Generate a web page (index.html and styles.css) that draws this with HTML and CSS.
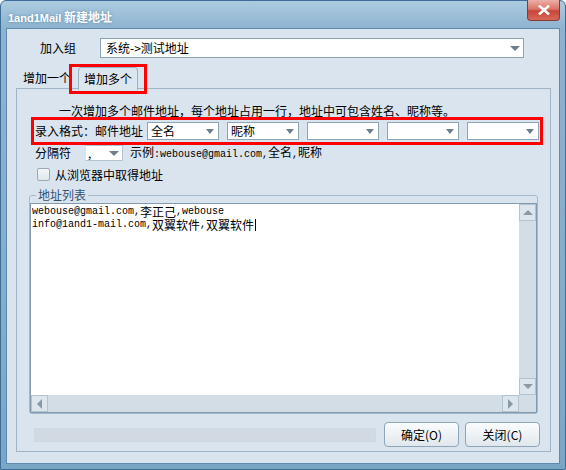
FILE: index.html
```html
<!DOCTYPE html>
<html lang="zh">
<head>
<meta charset="utf-8">
<title>1and1Mail 新建地址</title>
<link rel="stylesheet" href="styles.css">
</head>
<body>
<div class="window">
  <div class="titlebar">
    <span class="title"><span class="latin">1and1Mail</span> 新建地址</span>
    <div class="close">
      <svg width="12" height="10" viewBox="0 0 12 10"><path d="M2 1.5 L10 8.5 M10 1.5 L2 8.5" stroke="#fff" stroke-width="2.6" stroke-linecap="square"/></svg>
    </div>
  </div>
  <div class="client">
    <div class="group-row">
      <span class="group-label">加入组</span>
      <div class="combo combo-wide"><span class="combo-text">系统-&gt;测试地址</span><span class="arrow"></span></div>
    </div>
    <div class="tabs">
      <span class="tab">增加一个</span>
      <span class="tab tab-active">增加多个</span>
    </div>
    <div class="panel">
      <p class="hint">一次增加多个邮件地址，每个地址占用一行，地址中可包含姓名、昵称等。</p>
      <div class="format-row">
        <span class="format-label">录入格式：邮件地址</span>
        <div class="combo combo-small"><span class="combo-text">全名</span><span class="arrow"></span></div>
        <div class="combo combo-small"><span class="combo-text">昵称</span><span class="arrow"></span></div>
        <div class="combo combo-small"><span class="combo-text"></span><span class="arrow"></span></div>
        <div class="combo combo-small"><span class="combo-text"></span><span class="arrow"></span></div>
        <div class="combo combo-small"><span class="combo-text"></span><span class="arrow"></span></div>
      </div>
      <div class="sep-row">
        <span class="sep-label">分隔符</span>
        <div class="combo combo-sep"><span class="combo-text">,</span><span class="arrow"></span></div>
        <span class="example">示例<span class="mono">:webouse@gmail.com,</span>全名<span class="mono">,</span>昵称</span>
      </div>
      <label class="check-row"><span class="checkbox"></span><span>从浏览器中取得地址</span></label>
      <fieldset class="list-group">
        <legend>地址列表</legend>
        <div class="textarea">
          <div class="text-content">
            <div class="line"><span class="mono">webouse@gmail.com,</span><span class="cjk">李正己</span><span class="mono">,webouse</span></div>
            <div class="line"><span class="mono">info@1and1-mail.com,</span><span class="cjk">双翼软件</span><span class="mono">,</span><span class="cjk">双翼软件</span><span class="caret"></span></div>
          </div>
          <div class="vscroll">
            <div class="sbtn"><span class="tri tri-up"></span></div>
            <div class="strack"></div>
            <div class="sbtn"><span class="tri tri-down"></span></div>
          </div>
          <div class="hscroll">
            <div class="sbtn"><span class="tri tri-left"></span></div>
            <div class="strack"></div>
            <div class="sbtn"><span class="tri tri-right"></span></div>
          </div>
          <div class="corner"></div>
        </div>
      </fieldset>
      <div class="footer">
        <div class="progress"></div>
        <button class="btn btn-ok">确定(O)</button>
        <button class="btn btn-close">关闭(C)</button>
      </div>
    </div>
  </div>
</div>
<div class="mark mark-tab"></div>
<div class="mark mark-format"></div>
</body>
</html>
```

FILE: styles.css
```css
html, body {
  margin: 0;
  padding: 0;
}
body {
  width: 566px;
  height: 470px;
  overflow: hidden;
  position: relative;
  font-family: "Noto Sans CJK SC", "DejaVu Sans", sans-serif;
  font-size: 12px;
  color: #000;
  background: #ffffff;
}
.window {
  width: 566px;
  height: 470px;
  box-sizing: border-box;
  border: 1px solid #3e6e98;
  border-radius: 6px 6px 0 0;
  background: linear-gradient(#adcbe0 0px, #8cb3cf 28px, #85aecb 60%, #7aa6c6 100%);
  padding: 0 5px 5px 5px;
  display: flex;
  flex-direction: column;
}
.titlebar {
  height: 27px;
  display: flex;
  align-items: flex-start;
}
.title {
  color: #fff;
  font-weight: bold;
  font-size: 12px;
  line-height: 14px;
  padding: 9px 0 0 2px;
  text-shadow: 0 0 3px rgba(60, 100, 140, 0.6);
}
.title .latin {
  font-family: "Liberation Sans", sans-serif;
  font-size: 11px;
}
.close {
  margin-left: auto;
  margin-top: -1px;
  width: 33px;
  height: 21px;
  box-sizing: border-box;
  border: 1px solid #8a3a33;
  border-top: none;
  border-radius: 0 0 4px 4px;
  background: linear-gradient(#eab0a8, #dc7468 45%, #c9453a 55%, #d86a58);
  display: flex;
  align-items: center;
  justify-content: center;
}
.client {
  flex: 1;
  border: 1px solid #5c8ab0;
  background: #d9e4ee;
  display: flex;
  flex-direction: column;
  padding-top: 9px;
}
.group-row {
  display: flex;
  align-items: center;
  height: 20px;
}
.group-label {
  margin-left: 33px;
  width: 60px;
  line-height: 14px;
}
.combo {
  box-sizing: border-box;
  background: #fff;
  border: 1px solid #8ea5b8;
  display: flex;
  align-items: center;
}
.combo-text {
  flex: 1;
  padding-left: 3px;
  line-height: 14px;
  white-space: nowrap;
}
.arrow {
  width: 0;
  height: 0;
  border-left: 4px solid transparent;
  border-right: 4px solid transparent;
  border-top: 5px solid #6d7f8f;
  margin-right: 4px;
}
.combo-wide {
  width: 424px;
  height: 20px;
}
.combo-wide .combo-text {
  padding-left: 5px;
}
.combo-wide .arrow {
  margin-right: 3px;
  border-left-width: 5px;
  border-right-width: 5px;
}
.tabs {
  margin-top: 9px;
  height: 21px;
  display: flex;
  align-items: flex-end;
  padding-left: 9px;
}
.tab {
  padding: 0 7px;
  height: 20px;
  line-height: 20px;
}
.tab-active {
  position: relative;
  z-index: 1;
  height: 23px;
  line-height: 22px;
  padding: 0 5px;
  margin-bottom: -2px;
  box-sizing: border-box;
  border: 1px solid #9cb2c5;
  border-bottom: none;
  border-radius: 4px 4px 0 0;
  background: #dce6ef;
}
.panel {
  flex: 1;
  margin: 0 8px 11px 9px;
  border: 1px solid #a0b4c6;
  display: flex;
  flex-direction: column;
}
.hint {
  margin: 15px 0 0 42px;
  line-height: 14px;
}
.format-row {
  margin-top: 4px;
  height: 18px;
  display: flex;
  align-items: center;
  padding-left: 18px;
  gap: 8px;
}
.format-label {
  width: 104px;
  line-height: 14px;
  white-space: nowrap;
}
.combo-small {
  width: 72px;
  height: 18px;
}
.sep-row {
  margin-top: 5px;
  height: 16px;
  display: flex;
  align-items: center;
  padding-left: 18px;
}
.sep-label {
  width: 50px;
  line-height: 14px;
}
.combo-sep {
  width: 38px;
  height: 16px;
  border-color: #b2c3d1;
  border-left-color: #d9e4ee;
}
.combo-sep .combo-text {
  padding-left: 2px;
}
.combo-sep .arrow {
  margin-right: 3px;
  border-left-width: 5px;
  border-right-width: 5px;
}
.example {
  margin-left: 7px;
  line-height: 14px;
  white-space: nowrap;
}
.mono {
  font-family: "Liberation Mono", monospace;
  font-size: 10px;
}
.check-row {
  margin-top: 7px;
  height: 13px;
  display: flex;
  align-items: center;
  padding-left: 20px;
  gap: 5px;
  line-height: 14px;
}
.checkbox {
  width: 13px;
  height: 13px;
  box-sizing: border-box;
  border: 1px solid #9aa9b6;
  border-radius: 2px;
  background: linear-gradient(#f4f6f8, #e0e6ec);
}
.list-group {
  margin: 7px 12px 0 12px;
  padding: 1px 0 0 0;
  min-width: 0;
  border: 1px solid #a6b9ca;
  border-radius: 3px;
}
.list-group legend {
  margin-left: 6px;
  padding: 0 2px;
  line-height: 14px;
  color: #33516f;
}
.textarea {
  height: 210px;
  box-sizing: border-box;
  border: 1px solid #829bb1;
  background: #fff;
  display: grid;
  grid-template-columns: 1fr 17px;
  grid-template-rows: 1fr 17px;
}
.text-content {
  padding: 1px 0 0 1px;
  overflow: hidden;
}
.line {
  height: 13px;
  line-height: 13px;
  white-space: nowrap;
  display: flex;
  align-items: center;
}
.cjk {
  display: inline-block;
  height: 13px;
  font-size: 12px;
  line-height: 13px;
}
.caret {
  display: inline-block;
  width: 1px;
  height: 12px;
  background: #000;
  margin-left: 1px;
}
.vscroll {
  background: #d3dde6;
  display: flex;
  flex-direction: column;
}
.hscroll {
  background: #d3dde6;
  display: flex;
}
.strack {
  flex: 1;
}
.sbtn {
  width: 17px;
  height: 17px;
  box-sizing: border-box;
  border: 1px solid #b3c3d0;
  background: #dde6ed;
  display: flex;
  align-items: center;
  justify-content: center;
}
.corner {
  background: #d3dde6;
}
.tri {
  width: 0;
  height: 0;
}
.tri-up {
  border-left: 5px solid transparent;
  border-right: 5px solid transparent;
  border-bottom: 5px solid #8a99a6;
}
.tri-down {
  border-left: 5px solid transparent;
  border-right: 5px solid transparent;
  border-top: 5px solid #8a99a6;
}
.tri-left {
  border-top: 5px solid transparent;
  border-bottom: 5px solid transparent;
  border-right: 5px solid #8a99a6;
}
.tri-right {
  border-top: 5px solid transparent;
  border-bottom: 5px solid transparent;
  border-left: 5px solid #8a99a6;
}
.footer {
  margin-top: 8px;
  height: 25px;
  display: flex;
  align-items: center;
  padding: 0 10px 0 17px;
}
.progress {
  width: 342px;
  flex-shrink: 0;
  height: 14px;
  box-sizing: border-box;
  background: #d1dae2;
  border: 1px solid #cfd8e0;
}
.btn {
  width: 75px;
  flex-shrink: 0;
  height: 25px;
  box-sizing: border-box;
  border: 1px solid #8ea6ba;
  border-radius: 4px;
  background: linear-gradient(#fbfcfd, #eef2f5 50%, #e0e7ed);
  font-family: "Noto Sans CJK SC", sans-serif;
  font-size: 12px;
  color: #000;
  padding: 0;
}
.btn-ok {
  margin-left: 8px;
}
.btn-close {
  margin-left: 6px;
}
.mark {
  position: absolute;
  border: 3px solid #ff0000;
  box-sizing: border-box;
}
.mark-tab {
  left: 69px;
  top: 64px;
  width: 78px;
  height: 30px;
}
.mark-format {
  left: 31px;
  top: 117px;
  width: 512px;
  height: 28px;
}
```
